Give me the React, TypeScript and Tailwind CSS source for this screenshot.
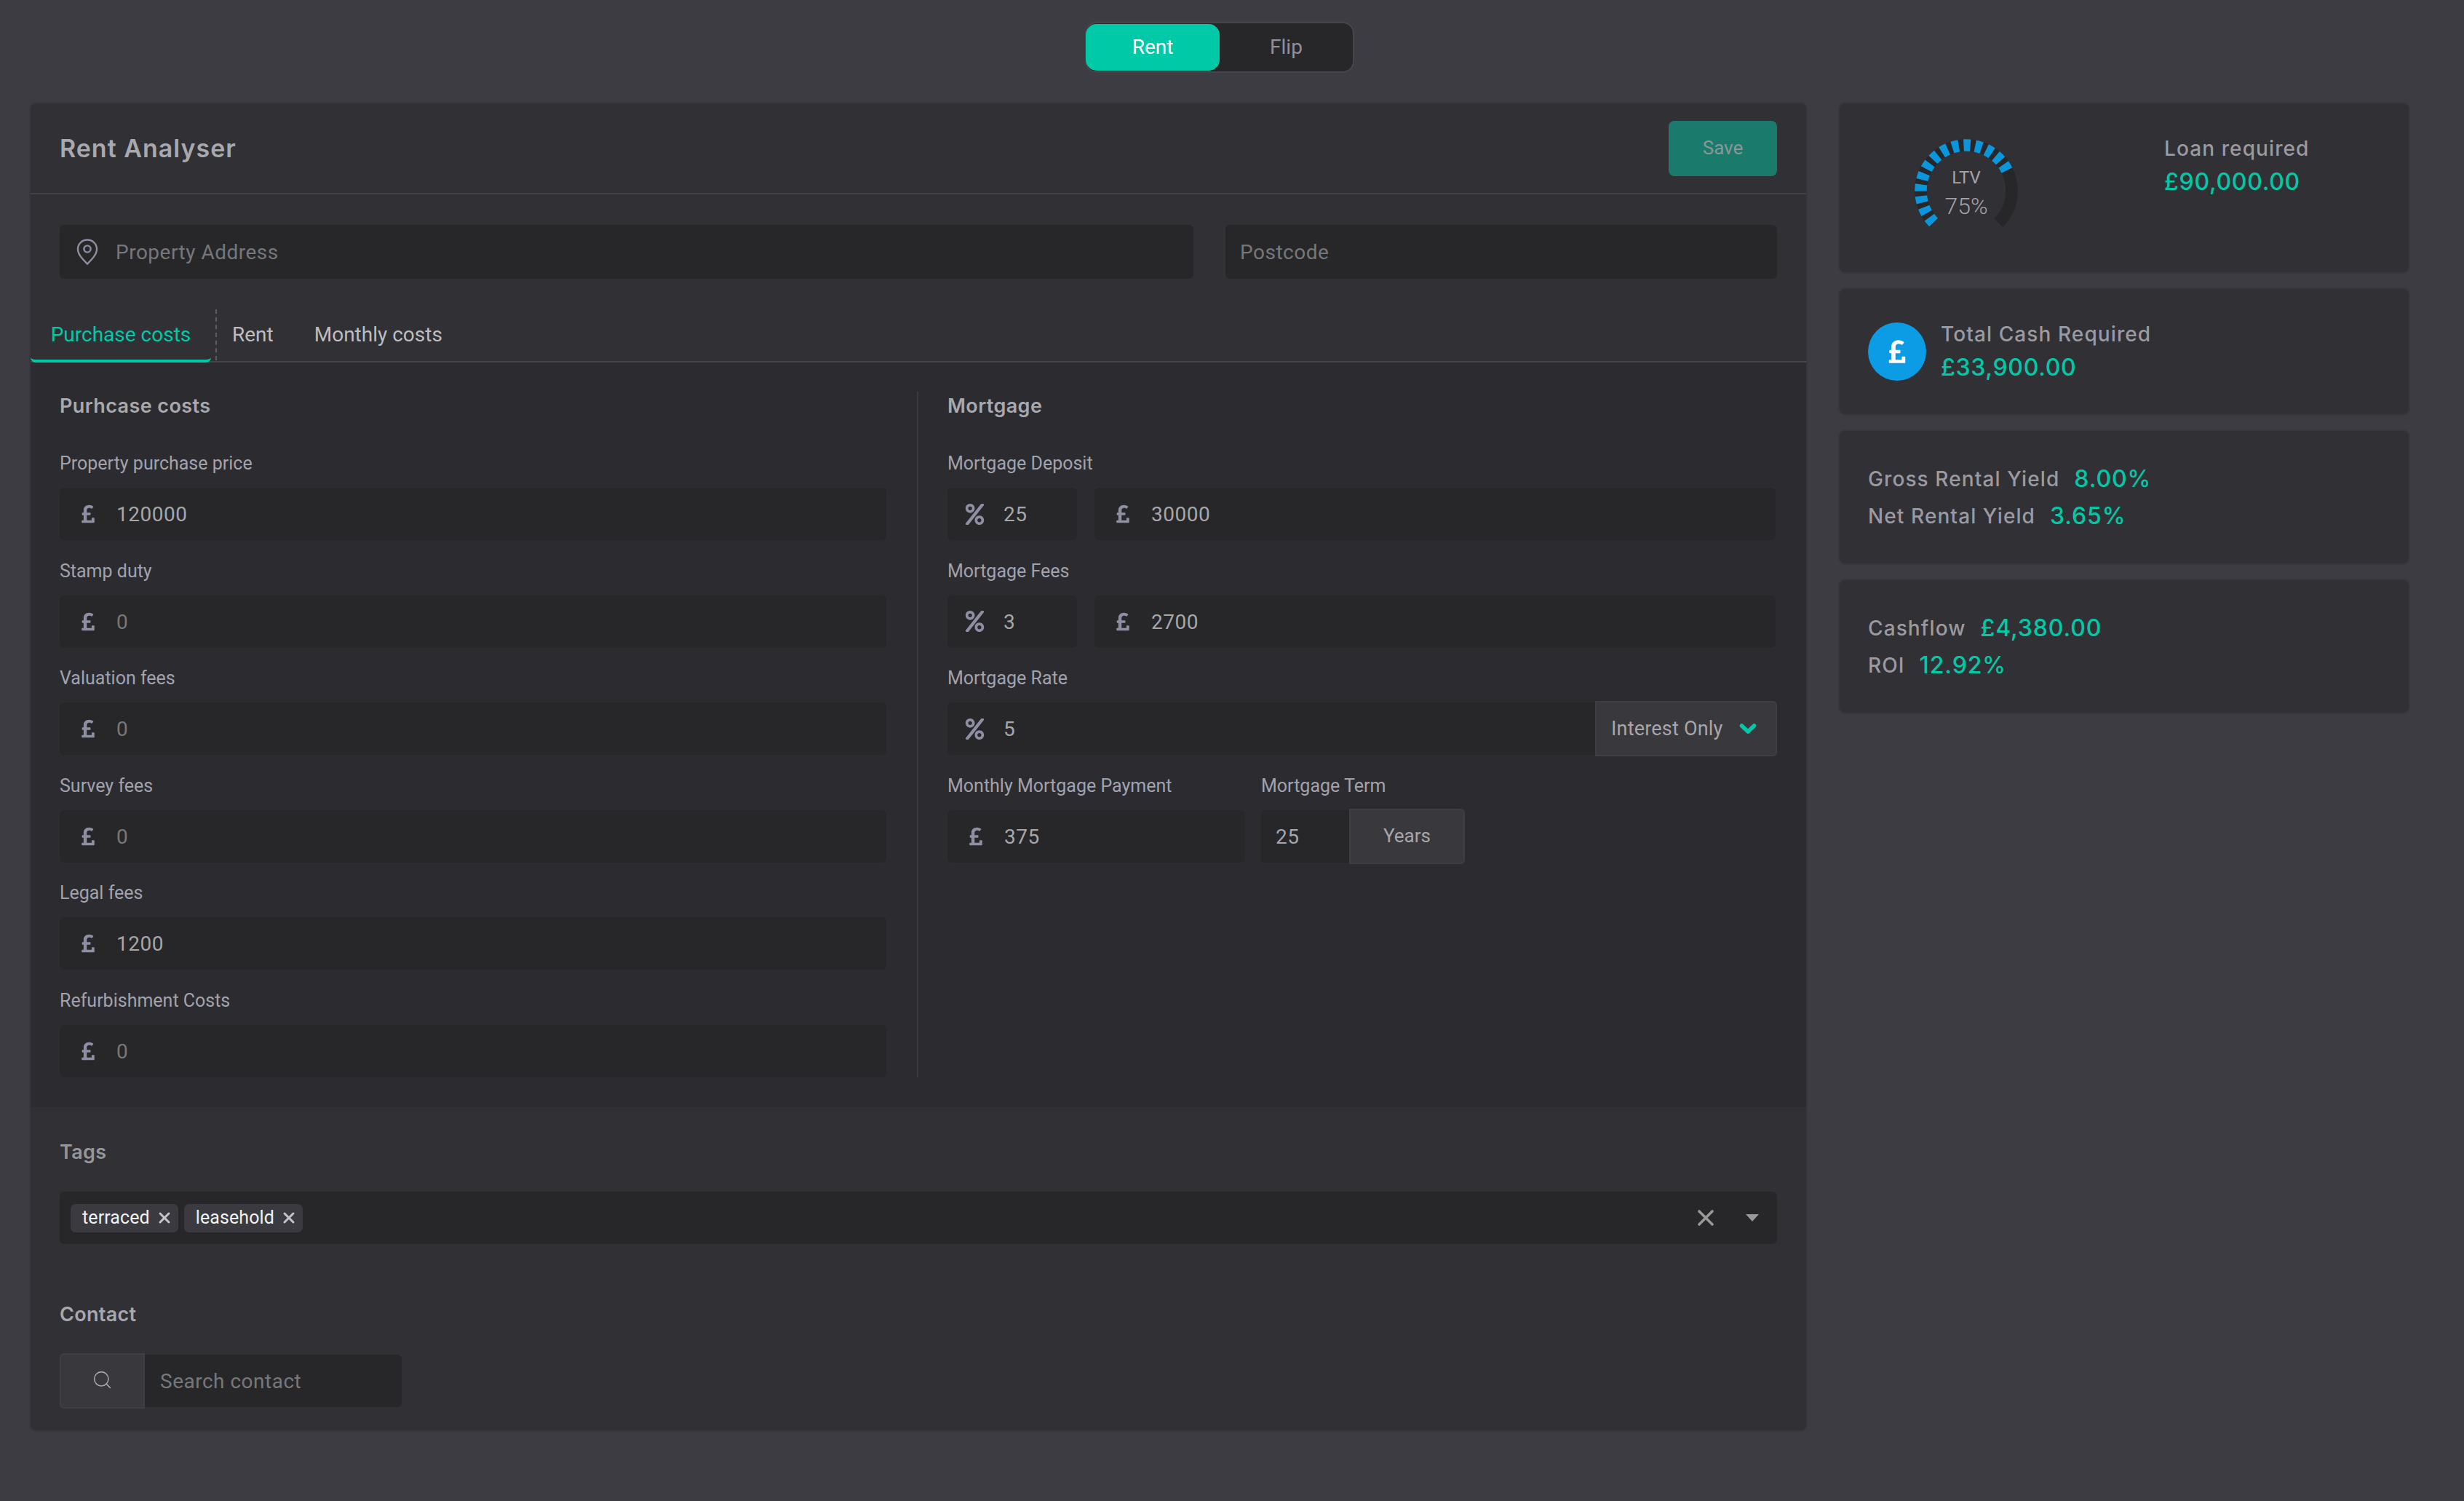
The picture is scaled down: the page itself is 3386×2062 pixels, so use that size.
import React from "react";
import { FaPoundSign, FaPercent } from "react-icons/fa";
import { Search, X } from "lucide-react";

const body = "font-['Roboto',sans-serif]";
const head = "font-['Inter',sans-serif]";

function Pound({ size = 28 }: { size?: number }) {
  return <FaPoundSign size={size} className="text-[#8e8fa2] shrink-0" />;
}

function Percent() {
  return <FaPercent size={29} className="text-[#8e8fa2] shrink-0" />;
}

function PinIcon() {
  return (
    <svg width="30" height="36" viewBox="0 0 30 36" fill="none" stroke="#8e8fa2" strokeWidth="2.4" className="shrink-0">
      <path d="M15 1.5C7.5 1.5 2 7.3 2 14.2 2 22 9.5 29 15 34.5 20.5 29 28 22 28 14.2 28 7.3 22.5 1.5 15 1.5z" />
      <circle cx="15" cy="14" r="4.6" />
    </svg>
  );
}

// 270 degree dial, dashes only up to the value
function LtvGauge() {
  const cx = 72;
  const cy = 72;
  const r = 62.5;
  const pt = (deg: number) => {
    const a = ((deg - 90) * Math.PI) / 180;
    return `${cx + r * Math.cos(a)} ${cy + r * Math.sin(a)}`;
  };
  const arc = (from: number, to: number) => `M${pt(from)} A${r} ${r} 0 ${to - from > 180 ? 1 : 0} 1 ${pt(to)}`;
  const dashes = Array.from({ length: 14 }, (_, i) => -130 + i * 14.55);
  return (
    <div className="relative w-[144px] h-[144px]">
      <svg width="144" height="144" viewBox="0 0 144 144" fill="none" strokeWidth="16.5">
        <path d={arc(-135, 135)} stroke="#27272a" />
        {dashes.map((d) => (
          <path key={d} d={arc(d - 4.2, d + 4.2)} stroke="#0a96dd" />
        ))}
      </svg>
      <div className={`absolute inset-0 flex flex-col items-center pt-[37px] text-[#a4a3aa] ${body}`}>
        <span className="text-[24px] leading-[34px]">LTV</span>
        <span className="text-[32px] leading-[44px] font-light">75%</span>
      </div>
    </div>
  );
}

function Box({ className = "", children }: { className?: string; children?: React.ReactNode }) {
  return <div className={`h-[72px] bg-[#27272a] rounded-[6px] flex items-center ${className}`}>{children}</div>;
}

function Value({ children, muted }: { children: React.ReactNode; muted?: boolean }) {
  return <span className={`pt-[2px] text-[28px] tracking-[0.5px] ${muted ? "text-[#77777b]" : "text-[#a6a6ab]"}`}>{children}</span>;
}

function Label({ children }: { children: React.ReactNode }) {
  return <div className="h-[34px] mb-[16px] flex items-center text-[25px] text-[#a2a2ae]">{children}</div>;
}

function PoundRow({ label, value }: { label: string; value: string }) {
  return (
    <div className="h-[147.5px]">
      <Label>{label}</Label>
      <Box className="pl-[25px] gap-[25px]">
        <Pound />
        <Value muted={value === "0"}>{value}</Value>
      </Box>
    </div>
  );
}

function Addon({ className = "", children }: { className?: string; children: React.ReactNode }) {
  return (
    <div className={`h-[76px] -my-[2px] bg-[#39383d] border-2 border-[#3f3e44] flex items-center text-[#a6a6ab] text-[26px] ${className}`}>
      {children}
    </div>
  );
}

function PercentPound({ label, percent, value }: { label: string; percent: string; value: string }) {
  return (
    <div className="h-[147.5px]">
      <Label>{label}</Label>
      <div className="flex gap-[24px]">
        <Box className="w-[178px] pl-[23px] gap-[25px]">
          <Percent />
          <Value>{percent}</Value>
        </Box>
        <Box className="flex-1 pl-[25px] gap-[25px]">
          <Pound />
          <Value>{value}</Value>
        </Box>
      </div>
    </div>
  );
}

function SectionTitle({ children }: { children: React.ReactNode }) {
  return (
    <div className="h-[82px]">
      <h3 className={`text-[27px] leading-[40px] font-semibold text-[#a8a8ae] tracking-[0.4px] ${head}`}>{children}</h3>
    </div>
  );
}

function PurchaseColumn() {
  return (
    <div className="w-[1177px] pl-[40px] pr-[1px]">
      <SectionTitle>Purhcase costs</SectionTitle>
      <PoundRow label="Property purchase price" value="120000" />
      <PoundRow label="Stamp duty" value="0" />
      <PoundRow label="Valuation fees" value="0" />
      <PoundRow label="Survey fees" value="0" />
      <PoundRow label="Legal fees" value="1200" />
      <div className="h-[122px]">
        <Label>Refurbishment Costs</Label>
        <Box className="pl-[25px] gap-[25px]">
          <Pound />
          <Value muted>0</Value>
        </Box>
      </div>
    </div>
  );
}

function MortgageColumn() {
  return (
    <div className="flex-1 ml-[41px] border-l-2 border-[#3b3b40] pl-[40px] pr-[42px]">
      <SectionTitle>Mortgage</SectionTitle>
      <PercentPound label="Mortgage Deposit" percent="25" value="30000" />
      <PercentPound label="Mortgage Fees" percent="3" value="2700" />
      <div className="h-[147.5px]">
        <Label>Mortgage Rate</Label>
        <div className="flex">
          <Box className="flex-1 pl-[23px] gap-[25px] rounded-r-none">
            <Percent />
            <Value>5</Value>
          </Box>
          <Addon className="w-[250px] -mr-[2px] pl-[20px] pr-[26px] justify-between rounded-r-[6px]">
            <span className="text-[27px] tracking-[0.2px]">Interest Only</span>
            <svg width="24" height="16" viewBox="0 0 24 16" fill="none" stroke="#00c9a7" strokeWidth="5.5" strokeLinecap="round" strokeLinejoin="round">
              <path d="M3.5 4l8.5 8 8.5-8" />
            </svg>
          </Addon>
        </div>
      </div>
      <div className="flex gap-[22px]">
        <div className="w-[409px]">
          <Label>Monthly Mortgage Payment</Label>
          <Box className="pl-[25px] gap-[25px]">
            <Pound />
            <Value>375</Value>
          </Box>
        </div>
        <div className="w-[280px]">
          <Label>Mortgage Term</Label>
          <div className="flex">
            <Box className="w-[121px] pl-[20px] rounded-r-none">
              <Value>25</Value>
            </Box>
            <Addon className="flex-1 justify-center rounded-r-[6px]">Years</Addon>
          </div>
        </div>
      </div>
    </div>
  );
}

function Chip({ children }: { children: React.ReactNode }) {
  return (
    <span className="h-[39px] bg-[#3b3a40] rounded-[7px] pl-[16px] pr-[7px] flex items-center gap-[8px] text-[25px] tracking-[0.1px] text-[#f1f1f2]">
      {children}
      <X size={24} strokeWidth={3} className="text-[#c4c4c8]" />
    </span>
  );
}

function MainPanel() {
  return (
    <section className={`w-[2444px] bg-[#313035] border-2 border-[#38373c] rounded-[10px] overflow-hidden ${body}`}>
      <header className="h-[125px] border-b-2 border-[#434247] pl-[40px] pr-[40px] flex items-center justify-between">
        <h1 className={`text-[34px] font-semibold text-[#a8a8ae] tracking-[1px] ${head}`}>Rent Analyser</h1>
        <button className="w-[149px] h-[76px] bg-[#1a7b6c] rounded-[8px] text-[26px] text-[#8b9795]">Save</button>
      </header>

      <div className="pt-[42px] pl-[40px] pr-[40px] flex gap-[44px]">
        <Box className="h-[74px] w-[1558px] pl-[23px] gap-[24px]">
          <PinIcon />
          <Value muted>Property Address</Value>
        </Box>
        <Box className="h-[74px] flex-1 pl-[20px]">
          <Value muted>Postcode</Value>
        </Box>
      </div>

      <nav className="mt-[42px] h-[73px] border-b-2 border-[#46454b] flex text-[28px] text-[#bdbdc0]">
        <span className="w-[248px] h-[73px] border-b-4 border-[#00c9a7] rounded-b-[7px] flex items-center justify-center text-[#00c9a7]">
          Purchase costs
        </span>
        <span className="ml-[6px] h-[70px] border-l-2 border-dashed border-[#5d5c62]" />
        <span className="ml-[21px] h-[70px] flex items-center">Rent</span>
        <span className="ml-[56px] h-[70px] flex items-center">Monthly costs</span>
      </nav>

      <div className="bg-[#2c2c30] pt-[40px] pb-[41.5px] flex">
        <PurchaseColumn />
        <MortgageColumn />
      </div>

      <div className="pl-[40px] pr-[40px] pt-[42px] pb-[30px]">
        <h3 className={`text-[27px] leading-[40px] font-semibold text-[#96969d] tracking-[0.3px] ${head}`}>Tags</h3>
        <Box className="mt-[34px] pl-[15px] pr-[25px] gap-[8px]">
          <Chip>terraced</Chip>
          <Chip>leasehold</Chip>
          <X size={36} strokeWidth={2.4} className="ml-auto text-[#999999]" />
          <svg width="18" height="10" viewBox="0 0 18 10" className="ml-[29px]">
            <path d="M0 0h18L9 10z" fill="#999999" />
          </svg>
        </Box>

        <h3 className={`mt-[77px] text-[27px] leading-[40px] font-semibold text-[#a8a8ae] tracking-[0.3px] ${head}`}>Contact</h3>
        <div className="mt-[33px] flex w-[470px]">
          <div className="w-[117px] h-[76px] bg-[#39383d] border-2 border-[#3f3e44] rounded-l-[6px] flex items-center justify-center">
            <Search size={29} strokeWidth={1.3} className="text-[#a6a6ab] -mt-[4px]" />
          </div>
          <div className="flex-1 h-[72px] mt-[2px] bg-[#27272a] rounded-r-[6px] flex items-center pl-[21px]">
            <Value muted>Search contact</Value>
          </div>
        </div>
      </div>
    </section>
  );
}

function Card({ className = "", children }: { className?: string; children: React.ReactNode }) {
  return <div className={`bg-[#313035] border-2 border-[#38373c] rounded-[10px] ${className}`}>{children}</div>;
}

function Stat({ label, value }: { label: string; value: string }) {
  return (
    <div className={`flex items-center gap-[20px] h-[51px] ${head}`}>
      <span className="text-[28px] font-medium text-[#9b9aa1] tracking-[1.1px]">{label}</span>
      <span className="text-[32px] font-medium text-[#00c9a7] tracking-[0.9px]">{value}</span>
    </div>
  );
}

function Sidebar() {
  return (
    <aside className={`w-[786px] flex flex-col gap-[19px] ${head}`}>
      <Card className="h-[236px] flex">
        <div className="w-[446px] pl-[102px] pt-[48px]">
          <LtvGauge />
        </div>
        <div className="pt-[40px]">
          <div className="text-[28px] font-medium text-[#9b9aa1] leading-[44px] tracking-[1.1px]">Loan required</div>
          <div className="text-[32px] font-medium text-[#00c9a7] leading-[48px] tracking-[0.7px]">£90,000.00</div>
        </div>
      </Card>
      <Card className="h-[176px] flex items-center pl-[39px] gap-[20px]">
        <div className="w-[80px] h-[80px] rounded-full bg-[#0b9ce5] flex items-center justify-center">
          <FaPoundSign size={36} className="text-white" />
        </div>
        <div>
          <div className="text-[28px] font-medium text-[#9b9aa1] leading-[44px] tracking-[1.1px]">Total Cash Required</div>
          <div className="text-[32px] font-medium text-[#00c9a7] leading-[48px] tracking-[0.7px]">£33,900.00</div>
        </div>
      </Card>
      <Card className="h-[186px] flex flex-col justify-center pl-[39px]">
        <Stat label="Gross Rental Yield" value="8.00%" />
        <Stat label="Net Rental Yield" value="3.65%" />
      </Card>
      <Card className="h-[186px] flex flex-col justify-center pl-[39px]">
        <Stat label="Cashflow" value="£4,380.00" />
        <Stat label="ROI" value="12.92%" />
      </Card>
    </aside>
  );
}

export default function App() {
  return (
    <div className="min-h-screen bg-[#3d3c42] pl-[40px] pt-[30px]">
      <div className="w-[3272px]">
        <div className={`w-[370px] h-[70px] mx-auto bg-[#27272a] border-2 border-[#46454b] rounded-[16px] flex text-[28px] ${body}`}>
          <span className="w-[184px] -ml-[1px] my-[1px] bg-[#00c9a7] rounded-[15px] text-white flex items-center justify-center">Rent</span>
          <span className="flex-1 text-[#8f8fa0] flex items-center justify-center">Flip</span>
        </div>
        <div className="mt-[40px] flex gap-[42px] items-start">
          <MainPanel />
          <Sidebar />
        </div>
      </div>
    </div>
  );
}
